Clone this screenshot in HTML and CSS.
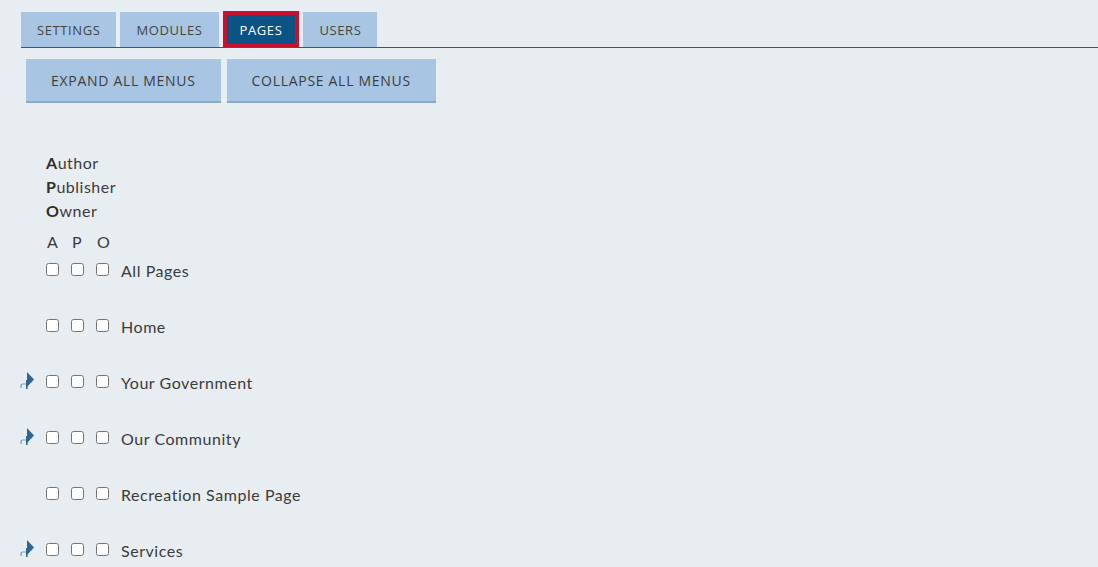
FILE: index.html
```html
<!DOCTYPE html>
<html>
<head>
<meta charset="utf-8">
<link rel="stylesheet" href="styles.css">
</head>
<body>
<nav class="tabs">
  <div class="tab">SETTINGS</div>
  <div class="tab">MODULES</div>
  <div class="tab active">PAGES</div>
  <div class="tab">USERS</div>
</nav>
<div class="actions">
  <button class="btn">EXPAND ALL MENUS</button>
  <button class="btn">COLLAPSE ALL MENUS</button>
</div>
<div class="legend">
  <div><b>A</b>uthor</div>
  <div><b>P</b>ublisher</div>
  <div><b>O</b>wner</div>
</div>
<div class="head"><span>A</span><span>P</span><span>O</span></div>
<ul class="pages">
  <li class="row"><span class="exp"></span><input type="checkbox"><input type="checkbox"><input type="checkbox"><span class="name">All Pages</span></li>
  <li class="row"><span class="exp"></span><input type="checkbox"><input type="checkbox"><input type="checkbox"><span class="name">Home</span></li>
  <li class="row"><span class="exp"><svg width="16" height="18" viewBox="0 0 16 18"><path d="M1 17V15Q1 13 3 13H7" fill="none" stroke="#6b9cc7" stroke-width="1.2"/><rect x="6" y="9" width="1.6" height="9" fill="#2e6796"/><polygon points="7,1 14,8.5 7,16" fill="#2e6796"/></svg></span><input type="checkbox"><input type="checkbox"><input type="checkbox"><span class="name">Your Government</span></li>
  <li class="row"><span class="exp"><svg width="16" height="18" viewBox="0 0 16 18"><path d="M1 17V15Q1 13 3 13H7" fill="none" stroke="#6b9cc7" stroke-width="1.2"/><rect x="6" y="9" width="1.6" height="9" fill="#2e6796"/><polygon points="7,1 14,8.5 7,16" fill="#2e6796"/></svg></span><input type="checkbox"><input type="checkbox"><input type="checkbox"><span class="name">Our Community</span></li>
  <li class="row"><span class="exp"></span><input type="checkbox"><input type="checkbox"><input type="checkbox"><span class="name">Recreation Sample Page</span></li>
  <li class="row"><span class="exp"><svg width="16" height="18" viewBox="0 0 16 18"><path d="M1 17V15Q1 13 3 13H7" fill="none" stroke="#6b9cc7" stroke-width="1.2"/><rect x="6" y="9" width="1.6" height="9" fill="#2e6796"/><polygon points="7,1 14,8.5 7,16" fill="#2e6796"/></svg></span><input type="checkbox"><input type="checkbox"><input type="checkbox"><span class="name">Services</span></li>
</ul>
</body>
</html>
```

FILE: styles.css
```css
html, body {
  margin: 0;
  padding: 0;
  background: #e8edf2;
  height: 100%;
  overflow: hidden;
}
body {
  font-family: "Lato", "Open Sans", sans-serif;
  color: #3b3b3b;
}
.tabs {
  display: flex;
  gap: 4px;
  margin-left: 21px;
  padding-top: 11px;
  border-bottom: 1px solid #1d5f93;
  align-items: flex-end;
}
.tab {
  height: 35px;
  padding: 0 16px;
  background: #a8c5e3;
  font-family: "Open Sans", sans-serif;
  font-size: 13px;
  letter-spacing: 0.6px;
  color: #454545;
  display: flex;
  align-items: center;
  box-sizing: border-box;
}
.tab.active {
  background: #0b5384;
  color: #ffffff;
  border: 4px solid #c8102e;
  border-bottom-width: 3px;
  padding: 0 13px;
  height: 36px;
}
.actions {
  display: flex;
  gap: 6px;
  margin: 11px 0 0 26px;
}
.btn {
  height: 44px;
  padding: 0 25px;
  background: #a8c5e3;
  border: 0;
  border-bottom: 2px solid #8ea9c6;
  font-family: "Open Sans", sans-serif;
  font-size: 14px;
  letter-spacing: 0.7px;
  color: #3d3d3d;
  border-radius: 0;
}
.legend {
  margin: 48px 0 0 46px;
  font-size: 16px;
  letter-spacing: 0.5px;
  line-height: 24px;
}
.legend b {
  font-weight: 700;
  color: #2e2e2e;
}
.head {
  display: flex;
  margin: 9px 0 0 46px;
  font-size: 16px;
  line-height: 20px;
}
.head span {
  width: 25px;
  padding-left: 1px;
  box-sizing: border-box;
}
.pages {
  list-style: none;
  margin: 6px 0 0 0;
  padding: 0 0 0 20px;
}
.row {
  display: flex;
  align-items: center;
  height: 24px;
  margin-bottom: 32px;
}
.exp {
  width: 26px;
  height: 18px;
  display: flex;
  align-items: center;
  margin-top: -4px;
}
.row input {
  margin: 0 12px 0 0;
  width: 13px;
  height: 13px;
  flex: none;
  position: relative;
  top: -1px;
}
.name {
  font-size: 16px;
  letter-spacing: 0.55px;
}
```
